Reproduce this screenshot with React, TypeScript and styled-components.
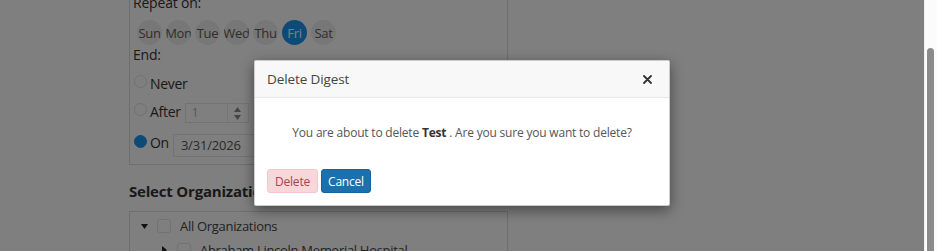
import styled, { createGlobalStyle } from "styled-components";

const DAYS = ["Sun", "Mon", "Tue", "Wed", "Thu", "Fri", "Sat"];

const GlobalStyle = createGlobalStyle`
  html, body {
    margin: 0;
    padding: 0;
    overflow: hidden;
    background: #ffffff;
  }

  body {
    font-family: "Open Sans", "Liberation Sans", sans-serif;
    color: #555555;
  }
`;

const App = () => {
  return (
    <>
      <GlobalStyle />
      <Screen>
        <Viewport>
          <Form>
            <ScheduleBox>
              <Label>Repeat on:</Label>
              <DaysRow>
                { DAYS.map(day => (
                  <Day key={ day } $active={ day === "Fri" }>{ day }</Day>
                )) }
              </DaysRow>
              <Label>End:</Label>

              <Options>
                <OptionRow $height={ 28 }>
                  <Radio $top={ 3 } />
                  <OptionText $top={ 2 }>Never</OptionText>
                </OptionRow>

                <OptionRow $height={ 30 }>
                  <Radio $top={ 3 } />
                  <OptionText $top={ 2 }>After</OptionText>
                  <NumberBox>
                    <NumberValue>1</NumberValue>
                    <Spinner>
                      <svg width="7" height="5" viewBox="0 0 7 5"><path d="M3.5 0L7 5H0z" fill="#8a8a8a" /></svg>
                      <svg width="7" height="5" viewBox="0 0 7 5"><path d="M0 0h7L3.5 5z" fill="#8a8a8a" /></svg>
                    </Spinner>
                  </NumberBox>
                </OptionRow>

                <OptionRow $height={ 34 }>
                  <Radio $top={ 5 } $checked />
                  <OptionText $top={ 3 }>On</OptionText>
                  <DateBox>3/31/2026</DateBox>
                </OptionRow>
              </Options>
            </ScheduleBox>

            <Heading>Select Organizations</Heading>

            <TreeBox>
              <TreeRow $depth={ 0 }>
                <Caret $open />
                <Checkbox />
                <TreeText>All Organizations</TreeText>
              </TreeRow>
              <TreeRow $depth={ 1 }>
                <Caret />
                <Checkbox />
                <TreeText>Abraham Lincoln Memorial Hospital</TreeText>
              </TreeRow>
            </TreeBox>
          </Form>

          <Backdrop>
            <Dialog>
              <DialogHeader>
                <DialogTitle>Delete Digest</DialogTitle>
                <CloseButton aria-label="Close">
                  <svg width="9" height="9" viewBox="0 0 9 9">
                    <path d="M1 1l7 7M8 1l-7 7" stroke="#333" strokeWidth="1.8" strokeLinecap="round" />
                  </svg>
                </CloseButton>
              </DialogHeader>

              <DialogBody>
                You are about to delete <strong>Test</strong> . Are you sure you want to delete?
              </DialogBody>

              <DialogFooter>
                <Button $variant="danger">Delete</Button>
                <Button $variant="primary">Cancel</Button>
              </DialogFooter>
            </Dialog>
          </Backdrop>
        </Viewport>

        <ScrollTrack>
          <ScrollThumb />
        </ScrollTrack>
      </Screen>
    </>
  )
}

const Caret = ({ $open }: { $open?: boolean }) => (
  <CaretBox>
    { $open
      ? <svg width="7" height="5" viewBox="0 0 7 5"><path d="M0 0h7L3.5 5z" fill="#222" /></svg>
      : <svg width="5" height="8" viewBox="0 0 5 8"><path d="M0 0l5 4-5 4z" fill="#222" /></svg> }
  </CaretBox>
)

const Screen = styled.div`
  display: flex;
  height: 251px;
  width: 937px;
`;

const Viewport = styled.div`
  position: relative;
  flex: 1;
  overflow: hidden;
  background: #ffffff;
`;

const Form = styled.div`
  width: 379px;
  margin: -7px 0 0 129px;
`;

const ScheduleBox = styled.div`
  border: 1px solid #dddddd;
  border-top: none;
  padding-left: 3px;
`;

const Label = styled.div`
  font-size: 14px;
  line-height: 20px;
  letter-spacing: -0.2px;
  color: #333333;
`;

const DaysRow = styled.div`
  display: flex;
  gap: 4px;
  margin: 7px 0 0 4px;
`;

const Day = styled.div<{ $active?: boolean }>`
  width: 25px;
  height: 25px;
  border-radius: 50%;
  overflow: hidden;
  display: flex;
  align-items: center;
  justify-content: center;
  white-space: nowrap;
  font-size: 13px;
  letter-spacing: -0.3px;
  background: ${ p => p.$active ? "#1a94ee" : "#eeeeee" };
  color: ${ p => p.$active ? "#ffffff" : "#5c5c5c" };
`;

const Options = styled.div`
  margin-top: 7px;
`;

const OptionRow = styled.div<{ $height: number }>`
  display: flex;
  align-items: flex-start;
  height: ${ p => p.$height }px;
`;

const Radio = styled.span<{ $top: number; $checked?: boolean }>`
  box-sizing: border-box;
  width: 13px;
  height: 13px;
  margin: ${ p => p.$top }px 3px 0 1px;
  border-radius: 50%;
  border: 1px solid ${ p => p.$checked ? "#1a94ee" : "#e2e2e2" };
  background: ${ p => p.$checked ? "#1a94ee" : "#ffffff" };
`;

const OptionText = styled.span<{ $top: number }>`
  margin-top: ${ p => p.$top }px;
  font-size: 14px;
  line-height: 20px;
  letter-spacing: -0.3px;
  color: #333333;
`;

const NumberBox = styled.div`
  box-sizing: border-box;
  display: flex;
  width: 64px;
  height: 20px;
  margin: 3px 0 0 4px;
  border: 1px solid #e6e6e6;
`;

const NumberValue = styled.span`
  flex: 1;
  padding-left: 6px;
  font-size: 12px;
  line-height: 18px;
  color: #b0b0b0;
`;

const Spinner = styled.div`
  width: 20px;
  border-left: 1px solid #ececec;
  display: flex;
  flex-direction: column;
  align-items: center;
  justify-content: center;
  gap: 3px;
`;

const DateBox = styled.div`
  box-sizing: border-box;
  width: 200px;
  height: 23px;
  margin: 4px 0 0 4px;
  padding-left: 7px;
  border: 1px solid #e6e6e6;
  font-size: 13px;
  line-height: 21px;
  letter-spacing: -0.2px;
  color: #555555;
`;

const Heading = styled.h3`
  margin: 16px 0 0;
  font-size: 15px;
  line-height: 20px;
  font-weight: 700;
  letter-spacing: -0.2px;
  color: #333333;
  white-space: nowrap;
`;

const TreeBox = styled.div`
  margin-top: 10px;
  padding-top: 2px;
  border: 1px solid #dddddd;
  border-bottom: none;
`;

const TreeRow = styled.div<{ $depth: number }>`
  display: flex;
  align-items: center;
  height: 24px;
  padding-left: ${ p => 11 + p.$depth * 20 }px;
`;

const CaretBox = styled.span`
  width: 7px;
  display: flex;
  justify-content: center;
  margin-right: 9px;
`;

const Checkbox = styled.span`
  box-sizing: border-box;
  width: 14px;
  height: 14px;
  margin-right: 9px;
  border: 1px solid #e4e4e4;
  border-radius: 3px;
  background: #ffffff;
`;

const TreeText = styled.span`
  font-size: 13px;
  letter-spacing: -0.3px;
  color: #444444;
  white-space: nowrap;
`;

const Backdrop = styled.div`
  position: absolute;
  inset: 0;
  display: flex;
  justify-content: center;
  align-items: flex-start;
  padding-top: 60px;
  background: rgba(0, 0, 0, 0.5);
`;

const Dialog = styled.div`
  box-sizing: border-box;
  width: 416px;
  height: 146px;
  background: #ffffff;
  border: 1px solid rgba(0, 0, 0, 0.2);
  border-radius: 2px;
  box-shadow: 0 4px 14px rgba(0, 0, 0, 0.45);
  overflow: hidden;
`;

const DialogHeader = styled.div`
  display: flex;
  align-items: center;
  justify-content: space-between;
  height: 36px;
  padding: 0 17px 0 12px;
  background: #f8f8f8;
  border-bottom: 1px solid #e7e7e7;
`;

const DialogTitle = styled.h4`
  margin: 0;
  font-size: 13.5px;
  font-weight: 400;
  letter-spacing: -0.1px;
  color: #444444;
`;

const CloseButton = styled.button`
  display: flex;
  padding: 0;
  border: none;
  background: none;
  cursor: pointer;
`;

const DialogBody = styled.div`
  padding: 26px 15px 0;
  text-align: center;
  font-size: 12px;
  line-height: 18px;
  letter-spacing: -0.2px;
  color: #555555;

  strong {
    color: #333333;
  }
`;

const DialogFooter = styled.div`
  display: flex;
  gap: 3px;
  padding: 27px 12px 0;
`;

const Button = styled.button<{ $variant: "danger" | "primary" }>`
  height: 24px;
  padding: 0 ${ p => p.$variant === "danger" ? 7 : 6 }px;
  border-radius: 3px;
  font-family: "Open Sans", "Liberation Sans", sans-serif;
  font-size: 12px;
  letter-spacing: -0.2px;
  cursor: pointer;
  border: 1px solid ${ p => p.$variant === "danger" ? "#f5c6cb" : "#16629a" };
  background: ${ p => p.$variant === "danger" ? "#f8d7da" : "#1c70ab" };
  color: ${ p => p.$variant === "danger" ? "#a3454f" : "#ffffff" };
`;

const ScrollTrack = styled.div`
  width: 13px;
  background: #fbfbfb;
  border-left: 1px solid #f0f0f0;
  box-sizing: border-box;
  padding: 48px 2px 0 2px;
`;

const ScrollThumb = styled.div`
  width: 7px;
  height: 100%;
  border-radius: 4px 4px 0 0;
  background: #8b8b8b;
`;

export default App
